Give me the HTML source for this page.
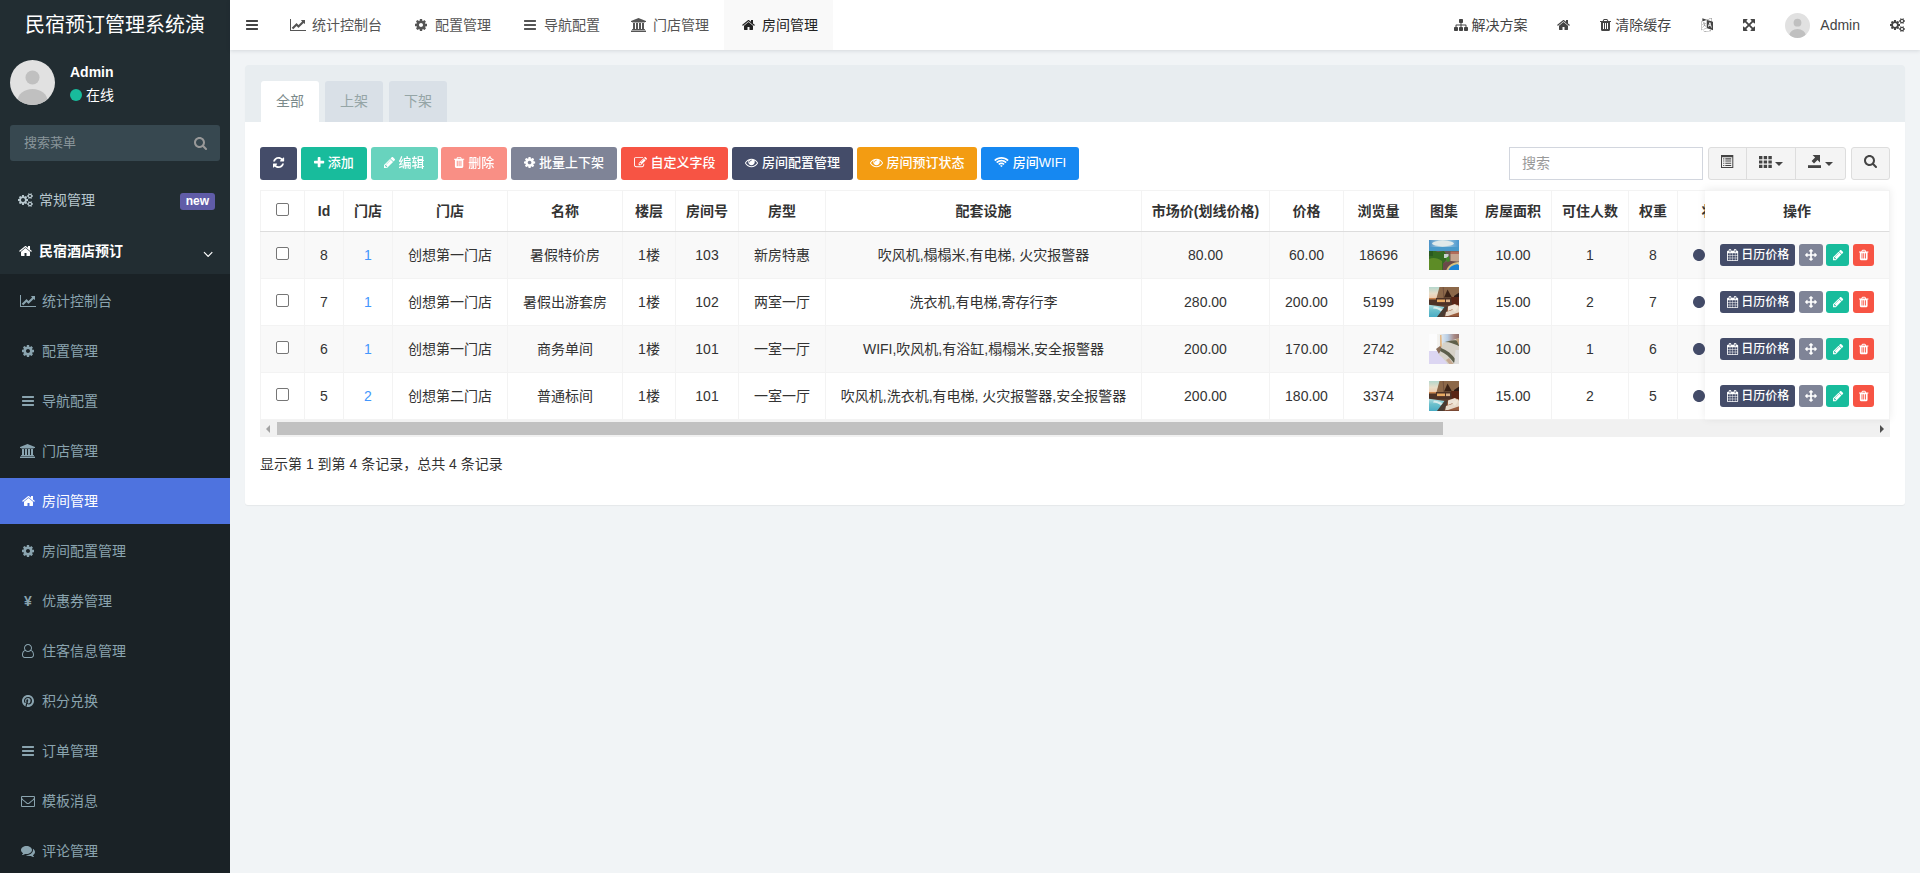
<!DOCTYPE html>
<html lang="zh-CN">
<head>
<meta charset="utf-8">
<title>民宿预订管理系统演示</title>
<style>
*{box-sizing:border-box}
html,body{margin:0;padding:0}
body{width:1920px;height:873px;overflow:hidden;background:#f1f4f6;color:#333;
 font-family:"Liberation Sans","Noto Sans CJK SC",sans-serif;font-size:14px;line-height:1.42857143}
a{text-decoration:none;color:inherit}
ul{list-style:none;margin:0;padding:0}
svg.i{display:inline-block;fill:currentColor;overflow:visible}
.fw{display:inline-block;text-align:center}

/* header */
.main-header{position:absolute;left:0;top:0;width:1920px;height:50px;z-index:10}
.logo{position:absolute;left:0;top:0;width:230px;height:50px;background:#222d32;color:#fff;font-size:20px;line-height:50px;text-align:center;white-space:nowrap;overflow:hidden;padding:0 15px}
.navbar{position:absolute;left:230px;top:0;right:0;height:50px;background:#fff;box-shadow:0 1px 4px rgba(0,21,41,.12)}
.sidebar-toggle{position:absolute;left:0;top:0;width:44px;height:50px;line-height:50px;text-align:center;color:#444}
.addtabs{position:absolute;left:44px;top:0;height:50px;display:flex}
.addtabs li{height:50px;line-height:50px;padding:0 15px;color:#555;white-space:nowrap}
.addtabs li.active{background:#f9f9f9;color:#222}
.addtabs li .fw{margin-right:5px}
.custom-menu{position:absolute;right:0;top:0;height:50px;display:flex}
.custom-menu li{height:50px;line-height:50px;padding:0 15px;color:#444;white-space:nowrap}
.custom-menu .uimg{display:inline-block;width:25px;height:25px;border-radius:50%;vertical-align:middle;margin-right:10px;margin-top:-1px;overflow:hidden}

/* sidebar */
.main-sidebar{position:absolute;left:0;top:50px;width:230px;height:823px;background:#222d32;overflow:hidden}
.user-panel{position:relative;height:65px;padding:10px}
.user-panel .avatar{position:absolute;left:10px;top:10px;width:45px;height:45px;border-radius:50%;overflow:hidden}
.user-panel .info{position:absolute;left:70px;top:0;color:#fff}
.user-panel .info p{margin:0;position:absolute;top:13px;left:0;font-weight:bold;font-size:14px;line-height:18px;white-space:nowrap}
.user-panel .info .st{position:absolute;top:36px;left:0;font-size:14px;line-height:18px;white-space:nowrap}
.user-panel .info .st i{display:inline-block;width:12px;height:12px;border-radius:50%;background:#18bc9c;margin-right:4px;vertical-align:-1px}
.sidebar-form{margin:10px;height:36px;border-radius:3px;background:#374850;position:relative;color:#8d9ea6}
.sidebar-form span{position:absolute;left:14px;top:0;line-height:36px;font-size:13px;color:#8a969b}
.sidebar-form svg{position:absolute;right:13px;top:11px}
.menu{padding-top:6px}
.menu>li>a{display:block;height:46px;line-height:46px;margin-bottom:5px;padding:0 5px 0 15px;color:#b8c7ce;position:relative;white-space:nowrap}
.menu>li>a>.fw{margin-right:4px;width:20px!important}
.menu>li.active>a{color:#fff;font-weight:bold;margin-bottom:0}
.badge-new{position:absolute;right:15px;top:16px;height:17px;line-height:17px;padding:0 6px;border-radius:3px;background:#605ca8;color:#fff;font-size:12px;font-weight:bold}
.chev{position:absolute;right:17px;top:4px}
.treeview{background:#1a2226;padding-top:4px;padding-bottom:400px}
.treeview li a{display:block;height:46px;line-height:46px;margin:0 0 4px 0;padding:0 5px 0 20px;color:#8aa4af;white-space:nowrap}
.treeview li a .fw{margin-right:6px;width:16px!important}
.treeview li.active a{background:#4e73df;color:#fff}

/* content */
.content{position:absolute;left:230px;top:50px;width:1690px;height:823px;padding:15px}
.panel{background:#fff;border-radius:3px;box-shadow:0 1px 1px rgba(0,0,0,.05);width:1660px;height:440px;position:relative}
.panel-heading{height:57px;background:#e8edf0;border-radius:3px 3px 0 0;padding:16px 0 0 16px}
.nav-tabs{display:flex}
.nav-tabs li{width:58px;height:41px;line-height:41px;text-align:center;margin-right:6px;background:#d9e0e7;color:#95a5a6;border-radius:3px 3px 0 0}
.nav-tabs li.active{background:#fff;color:#7b8a8b}

/* panel body */
.panel-body{position:relative}
.toolbar{position:absolute;left:15px;top:25px;width:1630px;height:33px}
.tb-left{position:absolute;left:0;top:0;white-space:nowrap;font-size:14px}
.btn{display:inline-block;height:33px;line-height:31px;padding:0 13px;border-radius:3px;color:#fff;font-size:13px;font-weight:500;white-space:nowrap;vertical-align:top}
.b-primary{background:#444c69}
.b-success{background:#18bc9c}
.b-danger{background:#f75444}
.b-default{background:#7f8497}
.b-warning{background:#f39c12}
.b-info{background:#1688f1}
.dis{opacity:.65}
.tb-search{position:absolute;left:1249px;top:0;width:194px;height:33px;border:1px solid #d2d6de;background:#fff;padding:0 12px;line-height:31px;color:#999}
.tb-group{position:absolute;left:1448px;top:0;width:138px;height:33px;border:1px solid #ddd;border-radius:3px;background:#f4f4f4;display:flex;color:#444}
.tb-group a{display:flex;align-items:center;justify-content:center;height:31px;border-right:1px solid #ddd}
.tb-group a svg{margin-top:-4px}
.tb-group .g1{width:38px}.tb-group .g2{width:49px}.tb-group .g3{width:49px;border-right:0}
.caret{display:inline-block;width:0;height:0;margin-left:4px;margin-top:1px;border-top:4px solid #444;border-left:4px solid transparent;border-right:4px solid transparent}
.tb-s{position:absolute;left:1591px;top:0;width:39px;height:33px;border:1px solid #ddd;border-radius:3px;background:#f4f4f4;text-align:center;line-height:31px;color:#444}
.tb-s svg{position:relative;top:-2.500px;left:-.500px}
.tablewrap{position:absolute;left:15px;top:68px;width:1630px;height:230px;overflow:hidden}
.tbl{border-collapse:collapse;table-layout:fixed;width:1677px;font-size:14px}
.tbl th,.tbl td{border:1px solid #f3f3f3;text-align:center;vertical-align:middle;padding:0;white-space:nowrap;overflow:hidden}
.tbl th{height:41px;font-weight:bold;color:#333;border-bottom:1px solid #ddd}
.tbl td{height:47px;color:#333}
.tbl tbody tr:nth-child(odd){background:#f9f9f9}
.cb{display:inline-block;width:13px;height:13px;border:1px solid #767676;border-radius:2px;background:#fff;vertical-align:middle;margin-top:-5px}
.lk{color:#4397fd}
.im{display:inline-block;width:30px;height:30px;vertical-align:middle;position:relative;left:-.500px}
.tbl td.tg{color:#444c69}
.tbl td.tg svg{position:relative;left:-1px}
.fixedcol{position:absolute;left:1460px;top:68px;width:185px;height:230px;background:#fff;box-shadow:0 -1px 8px rgba(0,0,0,.08);z-index:2}
.fh{height:42px;line-height:40px;text-align:center;font-weight:bold;border-bottom:1px solid #ddd;border-top:1px solid #f3f3f3;border-right:1px solid #f3f3f3}
.fr{height:47px;line-height:46px;text-align:center;border-bottom:1px solid #f3f3f3;border-right:1px solid #f3f3f3;font-size:12px;white-space:nowrap}
.fr.odd{background:#f9f9f9}
.xs{display:inline-block;height:22px;line-height:22px;padding:0 6px;border-radius:3px;color:#fff;font-size:12px;font-weight:500;vertical-align:middle;position:relative;top:-1px}
.xs.cal{padding-left:7px}.xs.pen{padding:0 6.600px}
.hscroll{position:absolute;left:15px;top:298px;width:1630px;height:17px;background:#f1f1f1}
.hscroll .thumb{position:absolute;left:17px;top:2px;width:1166px;height:13px;background:#c1c1c1}
.hscroll .al{position:absolute;left:6px;top:5px;border-right:4px solid #a3a3a3;border-top:4px solid transparent;border-bottom:4px solid transparent}
.hscroll .ar{position:absolute;right:6px;top:5px;border-left:4px solid #505050;border-top:4px solid transparent;border-bottom:4px solid transparent}
.pinfo{position:absolute;left:15px;top:331px;line-height:22px;color:#333;white-space:nowrap}
.yen{font-weight:bold;font-size:14px}
.sidebar-form svg{color:#999}
</style>
</head>
<body>
<header class="main-header">
  <a class="logo">民宿预订管理系统演</a>
  <nav class="navbar">
    <a class="sidebar-toggle"><svg class="i" viewBox="0 -1536 1536 1792" style="width:12.000px;height:14px;vertical-align:-2.000px;"><path transform="scale(1,-1)" d="M1536 192C1536 227 1507 256 1472 256H64C29 256 0 227 0 192V64C0 29 29 0 64 0H1472C1507 0 1536 29 1536 64ZM1536 704C1536 739 1507 768 1472 768H64C29 768 0 739 0 704V576C0 541 29 512 64 512H1472C1507 512 1536 541 1536 576ZM1536 1216C1536 1251 1507 1280 1472 1280H64C29 1280 0 1251 0 1216V1088C0 1053 29 1024 64 1024H1472C1507 1024 1536 1053 1536 1088Z"/></svg></a>
    <ul class="addtabs">
      <li><span class="fw" style="width:18.000px"><svg class="i" viewBox="0 -1536 2048 1792" style="width:16.000px;height:14px;vertical-align:-2.000px;"><path transform="scale(1,-1)" d="M2048 0H128V1408H0V-128H2048ZM1920 1248C1920 1266 1906 1280 1888 1280H1453C1425 1280 1410 1246 1431 1225L1552 1104L1088 640L855 873C842 886 822 886 809 873L224 288L416 96L832 512L1065 279C1078 266 1098 266 1111 279L1744 912L1865 791C1886 770 1920 785 1920 813Z"/></svg></span><span>统计控制台</span></li>
      <li><span class="fw" style="width:18.000px"><svg class="i" viewBox="0 -1536 1536 1792" style="width:12.000px;height:14px;vertical-align:-2.000px;"><path transform="scale(1,-1)" d="M1024 640C1024 499 909 384 768 384C627 384 512 499 512 640C512 781 627 896 768 896C909 896 1024 781 1024 640ZM1536 749C1536 766 1524 782 1507 785L1324 813C1314 846 1300 879 1283 911C1317 958 1354 1002 1388 1048C1393 1055 1396 1062 1396 1071C1396 1079 1394 1087 1389 1093C1347 1152 1277 1214 1224 1263C1217 1269 1208 1273 1199 1273C1190 1273 1181 1270 1175 1264L1033 1157C1004 1172 974 1184 943 1194L915 1378C913 1395 897 1408 879 1408H657C639 1408 625 1396 621 1380C605 1320 599 1255 592 1194C561 1184 530 1171 501 1156L363 1263C355 1269 346 1273 337 1273C303 1273 168 1127 144 1094C139 1087 135 1080 135 1071C135 1062 139 1054 145 1047C182 1002 218 957 252 909C236 879 223 849 213 817L27 789C12 786 0 768 0 753V531C0 514 12 498 29 495L212 468C222 434 236 401 253 369C219 322 182 278 148 232C143 225 140 218 140 209C140 201 142 193 147 186C189 128 259 66 312 18C319 11 328 7 337 7C346 7 355 10 362 16L503 123C532 108 562 96 593 86L621 -98C623 -115 639 -128 657 -128H879C897 -128 911 -116 915 -100C931 -40 937 25 944 86C975 96 1006 109 1035 124L1173 16C1181 11 1190 7 1199 7C1233 7 1368 154 1392 186C1398 193 1401 200 1401 209C1401 218 1397 227 1391 234C1354 279 1318 323 1284 372C1300 401 1312 431 1323 463L1508 491C1524 494 1536 512 1536 527Z"/></svg></span><span>配置管理</span></li>
      <li><span class="fw" style="width:18.000px"><svg class="i" viewBox="0 -1536 1536 1792" style="width:12.000px;height:14px;vertical-align:-2.000px;"><path transform="scale(1,-1)" d="M1536 192C1536 227 1507 256 1472 256H64C29 256 0 227 0 192V64C0 29 29 0 64 0H1472C1507 0 1536 29 1536 64ZM1536 704C1536 739 1507 768 1472 768H64C29 768 0 739 0 704V576C0 541 29 512 64 512H1472C1507 512 1536 541 1536 576ZM1536 1216C1536 1251 1507 1280 1472 1280H64C29 1280 0 1251 0 1216V1088C0 1053 29 1024 64 1024H1472C1507 1024 1536 1053 1536 1088Z"/></svg></span><span>导航配置</span></li>
      <li><span class="fw" style="width:18.000px"><svg class="i" viewBox="0 -1536 2048 1792" style="width:16.000px;height:14px;vertical-align:-2.000px;"><path transform="scale(1,-1)" d="M960 1536 0 1152V1024H128C128 989 159 960 197 960H1723C1761 960 1792 989 1792 1024H1920V1152ZM256 896V128H197C159 128 128 99 128 64V0H1792V64C1792 99 1761 128 1723 128H1664V896H1408V128H1280V896H1024V128H896V896H640V128H512V896ZM1851 -64H69C31 -64 0 -93 0 -128V-256H1920V-128C1920 -93 1889 -64 1851 -64Z"/></svg></span><span>门店管理</span></li>
      <li class="active"><span class="fw" style="width:18.000px"><svg class="i" viewBox="0 -1536 1664 1792" style="width:13.000px;height:14px;vertical-align:-2.000px;"><path transform="scale(1,-1)" d="M1408 544C1408 546 1408 548 1407 550L832 1024L257 550C257 548 256 546 256 544V64C256 29 285 0 320 0H704V384H960V0H1344C1379 0 1408 29 1408 64ZM1631 613C1642 626 1640 647 1627 658L1408 840V1248C1408 1266 1394 1280 1376 1280H1184C1166 1280 1152 1266 1152 1248V1053L908 1257C866 1292 798 1292 756 1257L37 658C24 647 22 626 33 613L95 539C100 533 108 529 116 528C125 527 133 530 140 535L832 1112L1524 535C1530 530 1537 528 1545 528C1546 528 1547 528 1548 528C1556 529 1564 533 1569 539L1631 613Z"/></svg></span><span>房间管理</span></li>
    </ul>
    <ul class="custom-menu">
      <li><svg class="i" viewBox="0 -1536 1792 1792" style="width:14.000px;height:14px;vertical-align:-2.000px;"><path transform="scale(1,-1)" d="M1792 288C1792 341 1749 384 1696 384H1600V576C1600 646 1542 704 1472 704H960V896H1056C1109 896 1152 939 1152 992V1312C1152 1365 1109 1408 1056 1408H736C683 1408 640 1365 640 1312V992C640 939 683 896 736 896H832V704H320C250 704 192 646 192 576V384H96C43 384 0 341 0 288V-32C0 -85 43 -128 96 -128H416C469 -128 512 -85 512 -32V288C512 341 469 384 416 384H320V576H832V384H736C683 384 640 341 640 288V-32C640 -85 683 -128 736 -128H1056C1109 -128 1152 -85 1152 -32V288C1152 341 1109 384 1056 384H960V576H1472V384H1376C1323 384 1280 341 1280 288V-32C1280 -85 1323 -128 1376 -128H1696C1749 -128 1792 -85 1792 -32Z"/></svg> 解决方案</li>
      <li><svg class="i" viewBox="0 -1536 1664 1792" style="width:13.000px;height:14px;vertical-align:-2.000px;"><path transform="scale(1,-1)" d="M1408 544C1408 546 1408 548 1407 550L832 1024L257 550C257 548 256 546 256 544V64C256 29 285 0 320 0H704V384H960V0H1344C1379 0 1408 29 1408 64ZM1631 613C1642 626 1640 647 1627 658L1408 840V1248C1408 1266 1394 1280 1376 1280H1184C1166 1280 1152 1266 1152 1248V1053L908 1257C866 1292 798 1292 756 1257L37 658C24 647 22 626 33 613L95 539C100 533 108 529 116 528C125 527 133 530 140 535L832 1112L1524 535C1530 530 1537 528 1545 528C1546 528 1547 528 1548 528C1556 529 1564 533 1569 539L1631 613Z"/></svg></li>
      <li><svg class="i" viewBox="0 -1536 1408 1792" style="width:11.000px;height:14px;vertical-align:-2.000px;"><path transform="scale(1,-1)" d="M512 160C512 142 498 128 480 128H416C398 128 384 142 384 160V864C384 882 398 896 416 896H480C498 896 512 882 512 864V160ZM768 160C768 142 754 128 736 128H672C654 128 640 142 640 160V864C640 882 654 896 672 896H736C754 896 768 882 768 864V160ZM1024 160C1024 142 1010 128 992 128H928C910 128 896 142 896 160V864C896 882 910 896 928 896H992C1010 896 1024 882 1024 864V160ZM480 1152 529 1269C532 1273 540 1279 546 1280H863C868 1279 877 1273 880 1269L928 1152ZM1408 1120C1408 1138 1394 1152 1376 1152H1067L997 1319C977 1368 917 1408 864 1408H544C491 1408 431 1368 411 1319L341 1152H32C14 1152 0 1138 0 1120V1056C0 1038 14 1024 32 1024H128V72C128 -38 200 -128 288 -128H1120C1208 -128 1280 -34 1280 76V1024H1376C1394 1024 1408 1038 1408 1056Z"/></svg> 清除缓存</li>
      <li><svg class="i" viewBox="0 -1536 1536 1792" style="width:12.000px;height:14px;vertical-align:-2.000px;"><path transform="scale(1,-1)" d="M654 458C656 466 645 512 639 514C633 516 514 566 497 574C483 581 449 595 433 602C478 672 506 725 510 733C517 748 565 842 566 847C567 853 568 875 567 880C566 885 549 875 525 867C501 859 456 829 438 826C421 822 365 801 336 791C307 781 253 765 231 759C209 753 189 752 177 748C178 731 182 725 182 725C185 720 197 707 210 704C224 700 247 701 257 704C268 706 286 715 288 719C290 723 287 735 291 739C295 742 350 755 370 761C391 768 470 795 480 794C477 782 414 656 393 618C373 580 254 414 229 385C209 362 163 305 147 293C151 291 180 294 185 297C218 318 272 386 290 407C342 468 388 533 424 588C431 585 488 538 503 528C518 518 577 485 590 479C603 474 652 451 654 458ZM449 944C446 957 438 961 428 961C418 960 388 952 373 947C359 943 328 934 315 931C302 928 273 932 269 936C265 940 274 905 286 892C308 870 326 867 335 866C355 866 380 872 395 878C410 884 435 897 445 916C447 920 452 927 449 944ZM1147 815 1071 630 1210 588ZM39 15V1046L733 1279V247ZM1280 332 1243 467 1032 532 987 422 885 453 1101 989 1201 958 1382 301ZM777 1294 1350 1490V1110ZM1088 -29 1131 -102C1100 -119 1071 -138 1038 -153C924 -202 839 -218 714 -218C613 -218 487 -177 397 -132C384 -126 337 -97 328 -97C318 -97 310 -105 310 -116C310 -123 312 -127 318 -132C402 -193 595 -256 701 -256H785C814 -256 847 -250 876 -244C971 -228 1071 -188 1152 -136L1192 -202L1246 -42ZM1536 1050 1389 1097V1515C1389 1528 1380 1536 1369 1536C1360 1536 738 1321 731 1319L173 1517V1133C88 1104 27 1084 24 1083C18 1081 10 1079 4 1072C2 1070 1 1065 0 1062V-16C0 -17 1 -18 1 -19C4 -27 11 -32 19 -32C29 -32 746 210 762 217C762 217 763 217 1536 -29Z"/></svg></li>
      <li><svg class="i" viewBox="0 -1536 1536 1792" style="width:12.000px;height:14px;vertical-align:-2.000px;"><path transform="scale(1,-1)" d="M1283 995 1427 851C1439 839 1455 832 1472 832C1480 832 1489 834 1497 837C1520 847 1536 870 1536 896V1344C1536 1379 1507 1408 1472 1408H1024C998 1408 975 1392 965 1368C955 1345 960 1317 979 1299L1123 1155L768 800L413 1155L557 1299C576 1317 581 1345 571 1368C561 1392 538 1408 512 1408H64C29 1408 0 1379 0 1344V896C0 870 16 847 40 837C47 834 56 832 64 832C81 832 97 839 109 851L253 995L608 640L253 285L109 429C91 448 63 453 40 443C16 433 0 410 0 384V-64C0 -99 29 -128 64 -128H512C538 -128 561 -112 571 -88C581 -65 576 -37 557 -19L413 125L768 480L1123 125L979 -19C960 -37 955 -65 965 -88C975 -112 998 -128 1024 -128H1472C1507 -128 1536 -99 1536 -64V384C1536 410 1520 433 1497 443C1473 453 1445 448 1427 429L1283 285L928 640Z"/></svg></li>
      <li><span class="uimg"><svg viewBox="0 0 45 45" width="100%" height="100%" style="display:block"><rect width="45" height="45" fill="#e1e1e1"/><circle cx="22.5" cy="17.5" r="7" fill="#c0c0c0"/><ellipse cx="22.5" cy="41" rx="15" ry="12" fill="#c0c0c0"/></svg></span><span>Admin</span></li>
      <li><svg class="i" viewBox="0 -1536 1920 1792" style="width:15.000px;height:14px;vertical-align:-2.000px;"><path transform="scale(1,-1)" d="M896 640C896 499 781 384 640 384C499 384 384 499 384 640C384 781 499 896 640 896C781 896 896 781 896 640ZM1664 128C1664 58 1607 0 1536 0C1466 0 1408 57 1408 128C1408 198 1466 256 1536 256C1606 256 1664 198 1664 128ZM1664 1152C1664 1082 1607 1024 1536 1024C1466 1024 1408 1081 1408 1152C1408 1222 1466 1280 1536 1280C1606 1280 1664 1222 1664 1152ZM1280 731C1280 745 1270 758 1256 761L1104 784C1095 812 1083 839 1070 866C1098 905 1128 941 1157 980C1161 986 1164 992 1164 999C1164 1027 1046 1135 1020 1159C1014 1164 1007 1167 999 1167C992 1167 985 1165 979 1160L861 1071C837 1083 812 1094 786 1102L763 1255C761 1269 747 1280 733 1280H547C533 1280 521 1270 517 1256C504 1207 499 1152 494 1102C467 1093 442 1083 417 1070L302 1160C296 1164 289 1167 281 1167C252 1167 140 1046 120 1019C115 1013 113 1006 113 999C113 992 116 985 120 979C152 941 182 904 210 864C197 839 186 814 178 788L23 764C10 762 0 747 0 734V549C0 535 10 522 24 520L176 496C185 468 197 441 211 414C182 375 152 338 123 300C119 294 116 288 116 281C116 252 234 145 260 121C266 116 273 113 281 113C288 113 296 115 301 120L419 209C443 197 468 186 494 178L517 25C519 11 533 0 547 0H733C747 0 759 10 763 24C776 73 781 128 786 179C813 187 838 197 863 210L978 120C984 116 991 113 999 113C1028 113 1140 235 1160 262C1165 267 1167 274 1167 281C1167 289 1164 295 1160 301C1128 339 1098 376 1070 416C1083 441 1094 466 1102 492L1257 516C1270 518 1280 533 1280 546ZM1920 198C1920 213 1791 227 1771 229C1763 247 1753 265 1741 281C1750 301 1792 401 1792 419C1792 421 1791 424 1788 426C1776 433 1669 496 1664 496L1658 494C1624 460 1594 421 1566 382C1556 383 1546 384 1536 384C1526 384 1516 383 1506 382C1496 397 1421 496 1408 496C1403 496 1296 432 1284 426C1281 424 1280 421 1280 419C1280 402 1322 301 1331 281C1319 265 1309 247 1301 229C1281 227 1152 213 1152 198V58C1152 43 1281 29 1301 27C1309 8 1319 -9 1331 -25C1322 -45 1280 -146 1280 -163C1280 -165 1281 -168 1284 -170C1296 -177 1403 -241 1408 -241C1421 -241 1496 -141 1506 -126C1516 -127 1526 -128 1536 -128C1546 -128 1556 -127 1566 -126C1576 -141 1651 -241 1664 -241C1669 -241 1776 -177 1788 -170C1791 -168 1792 -166 1792 -163C1792 -145 1750 -45 1741 -25C1753 -9 1763 8 1771 27C1791 29 1920 43 1920 58ZM1920 1222C1920 1237 1791 1251 1771 1253C1763 1271 1753 1289 1741 1305C1750 1325 1792 1425 1792 1443C1792 1445 1791 1448 1788 1450C1776 1457 1669 1520 1664 1520L1658 1518C1624 1484 1594 1445 1566 1406C1556 1407 1546 1408 1536 1408C1526 1408 1516 1407 1506 1406C1496 1421 1421 1520 1408 1520C1403 1520 1296 1456 1284 1450C1281 1448 1280 1445 1280 1443C1280 1426 1322 1325 1331 1305C1319 1289 1309 1271 1301 1253C1281 1251 1152 1237 1152 1222V1082C1152 1067 1281 1053 1301 1051C1309 1032 1319 1015 1331 999C1322 979 1280 878 1280 861C1280 859 1281 856 1284 854C1296 847 1403 783 1408 783C1421 783 1496 883 1506 898C1516 897 1526 896 1536 896C1546 896 1556 897 1566 898C1576 883 1651 783 1664 783C1669 783 1776 847 1788 854C1791 856 1792 858 1792 861C1792 879 1750 979 1741 999C1753 1015 1763 1032 1771 1051C1791 1053 1920 1067 1920 1082Z"/></svg></li>
    </ul>
  </nav>
</header>

<aside class="main-sidebar">
  <div class="user-panel">
    <div class="avatar"><svg viewBox="0 0 45 45" width="100%" height="100%" style="display:block"><rect width="45" height="45" fill="#e1e1e1"/><circle cx="22.5" cy="17.5" r="7" fill="#c0c0c0"/><ellipse cx="22.5" cy="41" rx="15" ry="12" fill="#c0c0c0"/></svg></div>
    <div class="info"><p>Admin</p><span class="st"><i></i>在线</span></div>
  </div>
  <div class="sidebar-form"><span>搜索菜单</span><svg class="i" viewBox="0 -1536 1664 1792" style="width:13.000px;height:14px;vertical-align:-2.000px;"><path transform="scale(1,-1)" d="M1152 704C1152 457 951 256 704 256C457 256 256 457 256 704C256 951 457 1152 704 1152C951 1152 1152 951 1152 704ZM1664 -128C1664 -94 1650 -61 1627 -38L1284 305C1365 422 1408 562 1408 704C1408 1093 1093 1408 704 1408C315 1408 0 1093 0 704C0 315 315 0 704 0C846 0 986 43 1103 124L1446 -218C1469 -242 1502 -256 1536 -256C1606 -256 1664 -198 1664 -128Z"/></svg></div>
  <ul class="menu">
    <li><a><span class="fw" style="width:18.000px"><svg class="i" viewBox="0 -1536 1920 1792" style="width:15.000px;height:14px;vertical-align:-2.000px;"><path transform="scale(1,-1)" d="M896 640C896 499 781 384 640 384C499 384 384 499 384 640C384 781 499 896 640 896C781 896 896 781 896 640ZM1664 128C1664 58 1607 0 1536 0C1466 0 1408 57 1408 128C1408 198 1466 256 1536 256C1606 256 1664 198 1664 128ZM1664 1152C1664 1082 1607 1024 1536 1024C1466 1024 1408 1081 1408 1152C1408 1222 1466 1280 1536 1280C1606 1280 1664 1222 1664 1152ZM1280 731C1280 745 1270 758 1256 761L1104 784C1095 812 1083 839 1070 866C1098 905 1128 941 1157 980C1161 986 1164 992 1164 999C1164 1027 1046 1135 1020 1159C1014 1164 1007 1167 999 1167C992 1167 985 1165 979 1160L861 1071C837 1083 812 1094 786 1102L763 1255C761 1269 747 1280 733 1280H547C533 1280 521 1270 517 1256C504 1207 499 1152 494 1102C467 1093 442 1083 417 1070L302 1160C296 1164 289 1167 281 1167C252 1167 140 1046 120 1019C115 1013 113 1006 113 999C113 992 116 985 120 979C152 941 182 904 210 864C197 839 186 814 178 788L23 764C10 762 0 747 0 734V549C0 535 10 522 24 520L176 496C185 468 197 441 211 414C182 375 152 338 123 300C119 294 116 288 116 281C116 252 234 145 260 121C266 116 273 113 281 113C288 113 296 115 301 120L419 209C443 197 468 186 494 178L517 25C519 11 533 0 547 0H733C747 0 759 10 763 24C776 73 781 128 786 179C813 187 838 197 863 210L978 120C984 116 991 113 999 113C1028 113 1140 235 1160 262C1165 267 1167 274 1167 281C1167 289 1164 295 1160 301C1128 339 1098 376 1070 416C1083 441 1094 466 1102 492L1257 516C1270 518 1280 533 1280 546ZM1920 198C1920 213 1791 227 1771 229C1763 247 1753 265 1741 281C1750 301 1792 401 1792 419C1792 421 1791 424 1788 426C1776 433 1669 496 1664 496L1658 494C1624 460 1594 421 1566 382C1556 383 1546 384 1536 384C1526 384 1516 383 1506 382C1496 397 1421 496 1408 496C1403 496 1296 432 1284 426C1281 424 1280 421 1280 419C1280 402 1322 301 1331 281C1319 265 1309 247 1301 229C1281 227 1152 213 1152 198V58C1152 43 1281 29 1301 27C1309 8 1319 -9 1331 -25C1322 -45 1280 -146 1280 -163C1280 -165 1281 -168 1284 -170C1296 -177 1403 -241 1408 -241C1421 -241 1496 -141 1506 -126C1516 -127 1526 -128 1536 -128C1546 -128 1556 -127 1566 -126C1576 -141 1651 -241 1664 -241C1669 -241 1776 -177 1788 -170C1791 -168 1792 -166 1792 -163C1792 -145 1750 -45 1741 -25C1753 -9 1763 8 1771 27C1791 29 1920 43 1920 58ZM1920 1222C1920 1237 1791 1251 1771 1253C1763 1271 1753 1289 1741 1305C1750 1325 1792 1425 1792 1443C1792 1445 1791 1448 1788 1450C1776 1457 1669 1520 1664 1520L1658 1518C1624 1484 1594 1445 1566 1406C1556 1407 1546 1408 1536 1408C1526 1408 1516 1407 1506 1406C1496 1421 1421 1520 1408 1520C1403 1520 1296 1456 1284 1450C1281 1448 1280 1445 1280 1443C1280 1426 1322 1325 1331 1305C1319 1289 1309 1271 1301 1253C1281 1251 1152 1237 1152 1222V1082C1152 1067 1281 1053 1301 1051C1309 1032 1319 1015 1331 999C1322 979 1280 878 1280 861C1280 859 1281 856 1284 854C1296 847 1403 783 1408 783C1421 783 1496 883 1506 898C1516 897 1526 896 1536 896C1546 896 1556 897 1566 898C1576 883 1651 783 1664 783C1669 783 1776 847 1788 854C1791 856 1792 858 1792 861C1792 879 1750 979 1741 999C1753 1015 1763 1032 1771 1051C1791 1053 1920 1067 1920 1082Z"/></svg></span><span>常规管理</span><small class="badge-new">new</small></a></li>
    <li class="active"><a><span class="fw" style="width:18.000px"><svg class="i" viewBox="0 -1536 1664 1792" style="width:13.000px;height:14px;vertical-align:-2.000px;"><path transform="scale(1,-1)" d="M1408 544C1408 546 1408 548 1407 550L832 1024L257 550C257 548 256 546 256 544V64C256 29 285 0 320 0H704V384H960V0H1344C1379 0 1408 29 1408 64ZM1631 613C1642 626 1640 647 1627 658L1408 840V1248C1408 1266 1394 1280 1376 1280H1184C1166 1280 1152 1266 1152 1248V1053L908 1257C866 1292 798 1292 756 1257L37 658C24 647 22 626 33 613L95 539C100 533 108 529 116 528C125 527 133 530 140 535L832 1112L1524 535C1530 530 1537 528 1545 528C1546 528 1547 528 1548 528C1556 529 1564 533 1569 539L1631 613Z"/></svg></span><span>民宿酒店预订</span><span class="chev"><svg class="i" viewBox="0 -1536 1152 1792" style="width:10.286px;height:16px;vertical-align:-2.286px;"><path transform="scale(1,-1)" d="M1075 800C1075 808 1071 817 1065 823L1015 873C1009 879 1000 883 992 883C984 883 975 879 969 873L576 480L183 873C177 879 168 883 160 883C151 883 143 879 137 873L87 823C81 817 77 808 77 800C77 792 81 783 87 777L553 311C559 305 568 301 576 301C584 301 593 305 599 311L1065 777C1071 783 1075 792 1075 800Z"/></svg></span></a>
      <ul class="treeview">
        <li><a><span class="fw" style="width:18.000px"><svg class="i" viewBox="0 -1536 2048 1792" style="width:16.000px;height:14px;vertical-align:-2.000px;"><path transform="scale(1,-1)" d="M2048 0H128V1408H0V-128H2048ZM1920 1248C1920 1266 1906 1280 1888 1280H1453C1425 1280 1410 1246 1431 1225L1552 1104L1088 640L855 873C842 886 822 886 809 873L224 288L416 96L832 512L1065 279C1078 266 1098 266 1111 279L1744 912L1865 791C1886 770 1920 785 1920 813Z"/></svg></span><span>统计控制台</span></a></li>
        <li><a><span class="fw" style="width:18.000px"><svg class="i" viewBox="0 -1536 1536 1792" style="width:12.000px;height:14px;vertical-align:-2.000px;"><path transform="scale(1,-1)" d="M1024 640C1024 499 909 384 768 384C627 384 512 499 512 640C512 781 627 896 768 896C909 896 1024 781 1024 640ZM1536 749C1536 766 1524 782 1507 785L1324 813C1314 846 1300 879 1283 911C1317 958 1354 1002 1388 1048C1393 1055 1396 1062 1396 1071C1396 1079 1394 1087 1389 1093C1347 1152 1277 1214 1224 1263C1217 1269 1208 1273 1199 1273C1190 1273 1181 1270 1175 1264L1033 1157C1004 1172 974 1184 943 1194L915 1378C913 1395 897 1408 879 1408H657C639 1408 625 1396 621 1380C605 1320 599 1255 592 1194C561 1184 530 1171 501 1156L363 1263C355 1269 346 1273 337 1273C303 1273 168 1127 144 1094C139 1087 135 1080 135 1071C135 1062 139 1054 145 1047C182 1002 218 957 252 909C236 879 223 849 213 817L27 789C12 786 0 768 0 753V531C0 514 12 498 29 495L212 468C222 434 236 401 253 369C219 322 182 278 148 232C143 225 140 218 140 209C140 201 142 193 147 186C189 128 259 66 312 18C319 11 328 7 337 7C346 7 355 10 362 16L503 123C532 108 562 96 593 86L621 -98C623 -115 639 -128 657 -128H879C897 -128 911 -116 915 -100C931 -40 937 25 944 86C975 96 1006 109 1035 124L1173 16C1181 11 1190 7 1199 7C1233 7 1368 154 1392 186C1398 193 1401 200 1401 209C1401 218 1397 227 1391 234C1354 279 1318 323 1284 372C1300 401 1312 431 1323 463L1508 491C1524 494 1536 512 1536 527Z"/></svg></span><span>配置管理</span></a></li>
        <li><a><span class="fw" style="width:18.000px"><svg class="i" viewBox="0 -1536 1536 1792" style="width:12.000px;height:14px;vertical-align:-2.000px;"><path transform="scale(1,-1)" d="M1536 192C1536 227 1507 256 1472 256H64C29 256 0 227 0 192V64C0 29 29 0 64 0H1472C1507 0 1536 29 1536 64ZM1536 704C1536 739 1507 768 1472 768H64C29 768 0 739 0 704V576C0 541 29 512 64 512H1472C1507 512 1536 541 1536 576ZM1536 1216C1536 1251 1507 1280 1472 1280H64C29 1280 0 1251 0 1216V1088C0 1053 29 1024 64 1024H1472C1507 1024 1536 1053 1536 1088Z"/></svg></span><span>导航配置</span></a></li>
        <li><a><span class="fw" style="width:18.000px"><svg class="i" viewBox="0 -1536 2048 1792" style="width:16.000px;height:14px;vertical-align:-2.000px;"><path transform="scale(1,-1)" d="M960 1536 0 1152V1024H128C128 989 159 960 197 960H1723C1761 960 1792 989 1792 1024H1920V1152ZM256 896V128H197C159 128 128 99 128 64V0H1792V64C1792 99 1761 128 1723 128H1664V896H1408V128H1280V896H1024V128H896V896H640V128H512V896ZM1851 -64H69C31 -64 0 -93 0 -128V-256H1920V-128C1920 -93 1889 -64 1851 -64Z"/></svg></span><span>门店管理</span></a></li>
        <li class="active"><a><span class="fw" style="width:18.000px"><svg class="i" viewBox="0 -1536 1664 1792" style="width:13.000px;height:14px;vertical-align:-2.000px;"><path transform="scale(1,-1)" d="M1408 544C1408 546 1408 548 1407 550L832 1024L257 550C257 548 256 546 256 544V64C256 29 285 0 320 0H704V384H960V0H1344C1379 0 1408 29 1408 64ZM1631 613C1642 626 1640 647 1627 658L1408 840V1248C1408 1266 1394 1280 1376 1280H1184C1166 1280 1152 1266 1152 1248V1053L908 1257C866 1292 798 1292 756 1257L37 658C24 647 22 626 33 613L95 539C100 533 108 529 116 528C125 527 133 530 140 535L832 1112L1524 535C1530 530 1537 528 1545 528C1546 528 1547 528 1548 528C1556 529 1564 533 1569 539L1631 613Z"/></svg></span><span>房间管理</span></a></li>
        <li><a><span class="fw" style="width:18.000px"><svg class="i" viewBox="0 -1536 1536 1792" style="width:12.000px;height:14px;vertical-align:-2.000px;"><path transform="scale(1,-1)" d="M1024 640C1024 499 909 384 768 384C627 384 512 499 512 640C512 781 627 896 768 896C909 896 1024 781 1024 640ZM1536 749C1536 766 1524 782 1507 785L1324 813C1314 846 1300 879 1283 911C1317 958 1354 1002 1388 1048C1393 1055 1396 1062 1396 1071C1396 1079 1394 1087 1389 1093C1347 1152 1277 1214 1224 1263C1217 1269 1208 1273 1199 1273C1190 1273 1181 1270 1175 1264L1033 1157C1004 1172 974 1184 943 1194L915 1378C913 1395 897 1408 879 1408H657C639 1408 625 1396 621 1380C605 1320 599 1255 592 1194C561 1184 530 1171 501 1156L363 1263C355 1269 346 1273 337 1273C303 1273 168 1127 144 1094C139 1087 135 1080 135 1071C135 1062 139 1054 145 1047C182 1002 218 957 252 909C236 879 223 849 213 817L27 789C12 786 0 768 0 753V531C0 514 12 498 29 495L212 468C222 434 236 401 253 369C219 322 182 278 148 232C143 225 140 218 140 209C140 201 142 193 147 186C189 128 259 66 312 18C319 11 328 7 337 7C346 7 355 10 362 16L503 123C532 108 562 96 593 86L621 -98C623 -115 639 -128 657 -128H879C897 -128 911 -116 915 -100C931 -40 937 25 944 86C975 96 1006 109 1035 124L1173 16C1181 11 1190 7 1199 7C1233 7 1368 154 1392 186C1398 193 1401 200 1401 209C1401 218 1397 227 1391 234C1354 279 1318 323 1284 372C1300 401 1312 431 1323 463L1508 491C1524 494 1536 512 1536 527Z"/></svg></span><span>房间配置管理</span></a></li>
        <li><a><span class="fw yen">¥</span><span>优惠券管理</span></a></li>
        <li><a><span class="fw" style="width:18.000px"><svg class="i" viewBox="0 -1536 1536 1792" style="width:12.000px;height:14px;vertical-align:-2.000px;"><path transform="scale(1,-1)" d="M1201 752C1251 831 1280 924 1280 1024C1280 1306 1050 1536 768 1536C486 1536 256 1306 256 1024C256 924 285 831 335 752C194 711 0 572 0 117C0 -89 153 -256 341 -256H1195C1383 -256 1536 -89 1536 117C1536 572 1342 711 1201 752ZM768 1408C980 1408 1152 1236 1152 1024C1152 812 980 640 768 640C556 640 384 812 384 1024C384 1236 556 1408 768 1408ZM1195 -128H341C224 -128 128 -19 128 117C128 432 234 629 432 639C522 560 639 512 768 512C897 512 1014 560 1104 639C1302 629 1408 432 1408 117C1408 -19 1312 -128 1195 -128Z"/></svg></span><span>住客信息管理</span></a></li>
        <li><a><span class="fw" style="width:18.000px"><svg class="i" viewBox="0 -1536 1536 1792" style="width:12.000px;height:14px;vertical-align:-2.000px;"><path transform="scale(1,-1)" d="M1536 640C1536 1064 1192 1408 768 1408C344 1408 0 1064 0 640C0 325 189 55 460 -64C458 -10 459 55 473 113C473 113 488 175 572 531C547 580 547 653 547 653C547 767 613 852 695 852C765 852 799 799 799 736C799 666 754 561 731 464C712 382 772 316 852 316C998 316 1096 503 1096 724C1096 893 982 1019 776 1019C543 1019 398 845 398 651C398 584 418 537 449 500C463 483 465 477 460 457C456 443 448 409 444 396C439 376 423 369 406 376C299 420 249 538 249 670C249 888 433 1150 797 1150C1091 1150 1284 937 1284 710C1284 408 1116 183 869 183C786 183 708 228 682 279C637 102 628 68 628 68C612 9 579 -50 550 -96C620 -117 692 -128 768 -128C1192 -128 1536 216 1536 640Z"/></svg></span><span>积分兑换</span></a></li>
        <li><a><span class="fw" style="width:18.000px"><svg class="i" viewBox="0 -1536 1536 1792" style="width:12.000px;height:14px;vertical-align:-2.000px;"><path transform="scale(1,-1)" d="M1536 192C1536 227 1507 256 1472 256H64C29 256 0 227 0 192V64C0 29 29 0 64 0H1472C1507 0 1536 29 1536 64ZM1536 704C1536 739 1507 768 1472 768H64C29 768 0 739 0 704V576C0 541 29 512 64 512H1472C1507 512 1536 541 1536 576ZM1536 1216C1536 1251 1507 1280 1472 1280H64C29 1280 0 1251 0 1216V1088C0 1053 29 1024 64 1024H1472C1507 1024 1536 1053 1536 1088Z"/></svg></span><span>订单管理</span></a></li>
        <li><a><span class="fw" style="width:18.000px"><svg class="i" viewBox="0 -1536 1792 1792" style="width:14.000px;height:14px;vertical-align:-2.000px;"><path transform="scale(1,-1)" d="M1664 32C1664 15 1649 0 1632 0H160C143 0 128 15 128 32V800C149 776 172 754 197 734C340 624 484 512 623 396C698 333 791 256 895 256H896H897C1001 256 1094 333 1169 396C1308 512 1452 624 1595 734C1620 754 1643 776 1664 800V32ZM1664 1083C1664 998 1582 887 1517 836C1383 731 1249 625 1116 519C1063 476 967 384 897 384H896H895C825 384 729 476 676 519C543 625 409 731 275 836C185 907 128 1006 128 1120C128 1137 143 1152 160 1152H1632C1670 1152 1664 1108 1664 1083ZM1792 1120C1792 1208 1720 1280 1632 1280H160C72 1280 0 1208 0 1120V32C0 -56 72 -128 160 -128H1632C1720 -128 1792 -56 1792 32Z"/></svg></span><span>模板消息</span></a></li>
        <li><a><span class="fw" style="width:18.000px"><svg class="i" viewBox="0 -1536 1792 1792" style="width:14.000px;height:14px;vertical-align:-2.000px;"><path transform="scale(1,-1)" d="M1408 768C1408 1051 1093 1280 704 1280C315 1280 0 1051 0 768C0 606 104 461 266 367C232 284 188 245 149 201C138 188 125 176 129 157C129 157 129 157 129 157C132 140 146 128 161 128C162 128 163 128 164 128C194 132 223 137 250 144C351 170 445 213 528 272C584 262 643 256 704 256C1093 256 1408 485 1408 768ZM1792 512C1792 679 1682 827 1513 920C1528 871 1536 820 1536 768C1536 589 1444 424 1277 302C1122 190 919 128 704 128C675 128 645 130 616 132C741 50 907 0 1088 0C1149 0 1208 6 1264 16C1347 -43 1441 -86 1542 -112C1569 -119 1598 -124 1628 -128C1644 -130 1659 -117 1663 -99C1663 -99 1663 -99 1663 -99C1667 -80 1654 -68 1643 -55C1604 -11 1560 28 1526 111C1688 205 1792 349 1792 512Z"/></svg></span><span>评论管理</span></a></li>
      </ul>
    </li>
  </ul>
</aside>

<div class="content">
  <div class="panel">
    <div class="panel-heading">
      <ul class="nav-tabs"><li class="active">全部</li><li>上架</li><li>下架</li></ul>
    </div>
    <div class="panel-body">
<div class="toolbar">
  <div class="tb-left"><a class="btn b-primary"><svg class="i" viewBox="0 -1536 1536 1792" style="width:11.143px;height:13px;vertical-align:-1.857px;"><path transform="scale(1,-1)" d="M1511 480C1511 497 1497 512 1479 512H1287C1272 512 1262 503 1257 489C1240 449 1228 411 1204 372C1111 220 946 128 768 128C639 128 514 178 420 266L557 403C569 415 576 431 576 448C576 483 547 512 512 512H64C29 512 0 483 0 448V0C0 -35 29 -64 64 -64C81 -64 97 -57 109 -45L238 84C380 -51 569 -128 764 -128C1133 -128 1425 119 1510 473C1511 475 1511 478 1511 480ZM1536 1280C1536 1315 1507 1344 1472 1344C1455 1344 1439 1337 1427 1325L1297 1196C1155 1330 964 1408 768 1408C399 1408 104 1162 18 807C18 805 18 802 18 800C18 783 32 768 50 768H249C264 768 274 777 279 791C296 831 308 869 332 908C425 1060 590 1152 768 1152C897 1152 1022 1103 1117 1015L979 877C967 865 960 849 960 832C960 797 989 768 1024 768H1472C1507 768 1536 797 1536 832Z"/></svg></a> <a class="btn b-success"><svg class="i" viewBox="0 -1536 1408 1792" style="width:10.214px;height:13px;vertical-align:-1.857px;"><path transform="scale(1,-1)" d="M1408 800C1408 853 1365 896 1312 896H896V1312C896 1365 853 1408 800 1408H608C555 1408 512 1365 512 1312V896H96C43 896 0 853 0 800V608C0 555 43 512 96 512H512V96C512 43 555 0 608 0H800C853 0 896 43 896 96V512H1312C1365 512 1408 555 1408 608Z"/></svg> 添加</a> <a class="btn b-success dis"><svg class="i" viewBox="0 -1536 1536 1792" style="width:11.143px;height:13px;vertical-align:-1.857px;"><path transform="scale(1,-1)" d="M363 0H256V128H128V235L219 326L454 91ZM886 928C886 922 884 916 879 911L337 369C332 364 326 362 320 362C307 362 298 371 298 384C298 390 300 396 305 401L847 943C852 948 858 950 864 950C877 950 886 941 886 928ZM832 1120 0 288V-128H416L1248 704ZM1515 1024C1515 1058 1501 1091 1478 1115L1243 1349C1219 1373 1186 1387 1152 1387C1118 1387 1085 1373 1062 1349L896 1184L1312 768L1478 934C1501 957 1515 990 1515 1024Z"/></svg> 编辑</a> <a class="btn b-danger dis"><svg class="i" viewBox="0 -1536 1408 1792" style="width:10.214px;height:13px;vertical-align:-1.857px;"><path transform="scale(1,-1)" d="M512 160C512 142 498 128 480 128H416C398 128 384 142 384 160V864C384 882 398 896 416 896H480C498 896 512 882 512 864V160ZM768 160C768 142 754 128 736 128H672C654 128 640 142 640 160V864C640 882 654 896 672 896H736C754 896 768 882 768 864V160ZM1024 160C1024 142 1010 128 992 128H928C910 128 896 142 896 160V864C896 882 910 896 928 896H992C1010 896 1024 882 1024 864V160ZM480 1152 529 1269C532 1273 540 1279 546 1280H863C868 1279 877 1273 880 1269L928 1152ZM1408 1120C1408 1138 1394 1152 1376 1152H1067L997 1319C977 1368 917 1408 864 1408H544C491 1408 431 1368 411 1319L341 1152H32C14 1152 0 1138 0 1120V1056C0 1038 14 1024 32 1024H128V72C128 -38 200 -128 288 -128H1120C1208 -128 1280 -34 1280 76V1024H1376C1394 1024 1408 1038 1408 1056Z"/></svg> 删除</a> <a class="btn b-default"><svg class="i" viewBox="0 -1536 1536 1792" style="width:11.143px;height:13px;vertical-align:-1.857px;"><path transform="scale(1,-1)" d="M1024 640C1024 499 909 384 768 384C627 384 512 499 512 640C512 781 627 896 768 896C909 896 1024 781 1024 640ZM1536 749C1536 766 1524 782 1507 785L1324 813C1314 846 1300 879 1283 911C1317 958 1354 1002 1388 1048C1393 1055 1396 1062 1396 1071C1396 1079 1394 1087 1389 1093C1347 1152 1277 1214 1224 1263C1217 1269 1208 1273 1199 1273C1190 1273 1181 1270 1175 1264L1033 1157C1004 1172 974 1184 943 1194L915 1378C913 1395 897 1408 879 1408H657C639 1408 625 1396 621 1380C605 1320 599 1255 592 1194C561 1184 530 1171 501 1156L363 1263C355 1269 346 1273 337 1273C303 1273 168 1127 144 1094C139 1087 135 1080 135 1071C135 1062 139 1054 145 1047C182 1002 218 957 252 909C236 879 223 849 213 817L27 789C12 786 0 768 0 753V531C0 514 12 498 29 495L212 468C222 434 236 401 253 369C219 322 182 278 148 232C143 225 140 218 140 209C140 201 142 193 147 186C189 128 259 66 312 18C319 11 328 7 337 7C346 7 355 10 362 16L503 123C532 108 562 96 593 86L621 -98C623 -115 639 -128 657 -128H879C897 -128 911 -116 915 -100C931 -40 937 25 944 86C975 96 1006 109 1035 124L1173 16C1181 11 1190 7 1199 7C1233 7 1368 154 1392 186C1398 193 1401 200 1401 209C1401 218 1397 227 1391 234C1354 279 1318 323 1284 372C1300 401 1312 431 1323 463L1508 491C1524 494 1536 512 1536 527Z"/></svg> 批量上下架</a> <a class="btn b-danger"><svg class="i" viewBox="0 -1536 1792 1792" style="width:13.000px;height:13px;vertical-align:-1.857px;"><path transform="scale(1,-1)" d="M888 352H832V448H736V504L852 620L1004 468ZM1328 1072C1337 1063 1336 1048 1327 1039L977 689C968 680 953 679 944 688C935 697 936 712 945 721L1295 1071C1304 1080 1319 1081 1328 1072ZM1408 478C1408 491 1400 502 1388 507C1376 512 1363 510 1353 500L1289 436C1283 430 1280 422 1280 414V288C1280 200 1208 128 1120 128H288C200 128 128 200 128 288V1120C128 1208 200 1280 288 1280H1120C1135 1280 1150 1278 1165 1274C1176 1270 1188 1273 1197 1282L1246 1331C1254 1339 1257 1349 1255 1360C1253 1370 1246 1379 1237 1383C1200 1400 1160 1408 1120 1408H288C129 1408 0 1279 0 1120V288C0 129 129 0 288 0H1120C1279 0 1408 129 1408 288ZM1312 1216 640 544V256H928L1600 928ZM1756 1084C1793 1121 1793 1183 1756 1220L1604 1372C1567 1409 1505 1409 1468 1372L1376 1280L1664 992L1756 1084Z"/></svg> 自定义字段</a> <a class="btn b-primary"><svg class="i" viewBox="0 -1536 1792 1792" style="width:13.000px;height:13px;vertical-align:-1.857px;"><path transform="scale(1,-1)" d="M1664 576C1493 312 1217 128 896 128C575 128 299 312 128 576C223 723 353 849 509 929C469 861 448 783 448 704C448 457 649 256 896 256C1143 256 1344 457 1344 704C1344 783 1323 861 1283 929C1439 849 1569 723 1664 576ZM944 960C944 934 922 912 896 912C782 912 688 818 688 704C688 678 666 656 640 656C614 656 592 678 592 704C592 871 729 1008 896 1008C922 1008 944 986 944 960ZM1792 576C1792 601 1784 624 1772 645C1588 947 1251 1152 896 1152C541 1152 204 947 20 645C8 624 0 601 0 576C0 551 8 528 20 507C204 205 541 0 896 0C1251 0 1588 204 1772 507C1784 528 1792 551 1792 576Z"/></svg> 房间配置管理</a> <a class="btn b-warning"><svg class="i" viewBox="0 -1536 1792 1792" style="width:13.000px;height:13px;vertical-align:-1.857px;"><path transform="scale(1,-1)" d="M1664 576C1493 312 1217 128 896 128C575 128 299 312 128 576C223 723 353 849 509 929C469 861 448 783 448 704C448 457 649 256 896 256C1143 256 1344 457 1344 704C1344 783 1323 861 1283 929C1439 849 1569 723 1664 576ZM944 960C944 934 922 912 896 912C782 912 688 818 688 704C688 678 666 656 640 656C614 656 592 678 592 704C592 871 729 1008 896 1008C922 1008 944 986 944 960ZM1792 576C1792 601 1784 624 1772 645C1588 947 1251 1152 896 1152C541 1152 204 947 20 645C8 624 0 601 0 576C0 551 8 528 20 507C204 205 541 0 896 0C1251 0 1588 204 1772 507C1784 528 1792 551 1792 576Z"/></svg> 房间预订状态</a> <a class="btn b-info"><svg class="i" viewBox="0 -1536 2048 1792" style="width:14.857px;height:13px;vertical-align:-1.857px;"><path transform="scale(1,-1)" d="M1024 13C1050 13 1190 153 1190 180C1190 229 1062 256 1024 256C986 256 858 229 858 180C858 153 998 13 1024 13ZM1294 284C1318 284 1463 428 1463 452C1463 461 1459 469 1453 475C1346 581 1172 640 1024 640C876 640 702 581 595 475C589 469 585 461 585 452C585 428 730 284 754 284C769 284 876 384 1024 384C1171 384 1280 284 1294 284ZM1567 556C1590 556 1734 700 1734 724C1734 732 1730 740 1724 746C1545 925 1275 1024 1024 1024C773 1024 503 925 324 746C318 740 314 732 314 724C314 700 458 556 481 556C492 556 722 768 1024 768C1240 768 1379 692 1544 564C1550 560 1559 556 1567 556ZM1838 827C1861 827 2006 971 2006 995C2006 1004 2002 1012 1996 1018C1743 1269 1378 1408 1024 1408C670 1408 305 1269 52 1018C46 1012 42 1004 42 995C42 971 187 827 210 827C218 827 226 831 232 836C463 1039 712 1152 1024 1152C1336 1152 1585 1039 1816 836C1822 831 1830 827 1838 827Z"/></svg> 房间WIFI</a></div>
  <div class="tb-search"><span>搜索</span></div>
  <div class="tb-group"><a class="g1"><svg class="i" viewBox="0 0 12.3 13" style="width:12.300px;height:13px"><path fill-rule="evenodd" d="M0 0h12.300v13h-12.300zM1 2.200v9.800h10.300v-9.800z"/><path d="M2.200 3.300h1.100v1.100h-1.100zM4.300 3.300h5.900v1.100h-5.900zM2.200 5.500h1.100v1.100h-1.100zM4.300 5.500h5.900v1.100h-5.900zM2.200 7.700h1.100v1.100h-1.100zM4.300 7.700h5.900v1.100h-5.900zM2.200 9.900h1.100v1.100h-1.100zM4.300 9.900h5.900v1.100h-5.900z"/></svg></a><a class="g2"><svg class="i" viewBox="0 0 12.8 12" style="width:12.800px;height:12px"><path d="M0 0h3.400v3.200h-3.400zM4.700 0h3.400v3.200h-3.400zM9.400 0h3.400v3.200h-3.400zM0 4.400h3.400v3.200h-3.400zM4.700 4.400h3.400v3.200h-3.400zM9.400 4.400h3.400v3.200h-3.400zM0 8.800h3.400v3.200h-3.400zM4.700 8.800h3.400v3.200h-3.400zM9.400 8.800h3.400v3.200h-3.400z"/></svg><b class="caret"></b></a><a class="g3"><svg class="i" viewBox="0 0 13 13" style="width:13px;height:13px"><rect x="0" y="10.200" width="13" height="2.800"/><path d="M4.600 0h7.400v7.400l-2.500-2.500-3.500 3.500-2.400-2.400 3.500-3.500z"/></svg><b class="caret"></b></a></div>
  <a class="tb-s"><svg class="i" viewBox="0 -1536 1664 1792" style="width:13.000px;height:14px;vertical-align:-2.000px;"><path transform="scale(1,-1)" d="M1152 704C1152 457 951 256 704 256C457 256 256 457 256 704C256 951 457 1152 704 1152C951 1152 1152 951 1152 704ZM1664 -128C1664 -94 1650 -61 1627 -38L1284 305C1365 422 1408 562 1408 704C1408 1093 1093 1408 704 1408C315 1408 0 1093 0 704C0 315 315 0 704 0C846 0 986 43 1103 124L1446 -218C1469 -242 1502 -256 1536 -256C1606 -256 1664 -198 1664 -128Z"/></svg></a>
</div>
<div class="tablewrap">
<table class="tbl">
<colgroup><col style="width:44px"><col style="width:39px"><col style="width:49px"><col style="width:115px"><col style="width:115px"><col style="width:53px"><col style="width:63px"><col style="width:87px"><col style="width:316px"><col style="width:128px"><col style="width:74px"><col style="width:70px"><col style="width:61px"><col style="width:77px"><col style="width:77px"><col style="width:49px"><col style="width:76px"><col style="width:184px"></colgroup>
<thead><tr><th><i class="cb"></i></th><th>Id</th><th>门店</th><th>门店</th><th>名称</th><th>楼层</th><th>房间号</th><th>房型</th><th>配套设施</th><th>市场价(划线价格)</th><th>价格</th><th>浏览量</th><th>图集</th><th>房屋面积</th><th>可住人数</th><th>权重</th><th>状态</th><th>操作</th></tr></thead>
<tbody>
<tr><td><i class="cb"></i></td><td>8</td><td><a class="lk">1</a></td><td>创想第一门店</td><td>暑假特价房</td><td>1楼</td><td>103</td><td>新房特惠</td><td>吹风机,榻榻米,有电梯, 火灾报警器</td><td>80.00</td><td>60.00</td><td>18696</td><td><svg class="im" viewBox="0 0 30 30"><defs><linearGradient id="sk1" x1="0" x2="1"><stop offset="0" stop-color="#3a86c2"/><stop offset=".45" stop-color="#c4dce4"/><stop offset="1" stop-color="#3a8ecb"/></linearGradient><filter id="bl1" x="-10%" y="-10%" width="120%" height="120%"><feGaussianBlur stdDeviation=".55"/></filter><clipPath id="cp1"><rect width="30" height="30"/></clipPath></defs><g clip-path="url(#cp1)"><g filter="url(#bl1)"><rect x="-2" y="-2" width="34" height="10" fill="url(#sk1)"/><ellipse cx="14" cy="3.400" rx="11" ry="2.800" fill="#dfe9ea"/><rect x="-2" y="7" width="34" height="5" fill="#4a9acb"/><rect x="-2" y="11" width="34" height="21" fill="#6b5a52"/><path d="M-2 11h8l3 1 6-1 2 3v6l-3 4 0 8h-16z" fill="#356c20"/><path d="M0 19c4-2 9-1 13 2v9h-13z" fill="#5d8c28"/><path d="M-1 11h5v5h-5z" fill="#2c5a20"/><rect x="15" y="14" width="4.5" height="4" fill="#c8d2d0"/><path d="M17 18l3-2 1 6-3 0z" fill="#3f8a2c"/><rect x="21.500" y="11.500" width="10" height="3" fill="#b26c5a"/><rect x="21.500" y="14" width="10" height="7.500" fill="#c4a48e"/><path d="M14 23l8-2 6 1-9 9h-5z" fill="#6a4a4a"/><path d="M17 31c2-6 7-9 14-9v3c-5 0-9 2-11 6z" fill="#d6c07e"/><path d="M19 31c2-5 6-7 12-7v7z" fill="#1c84d4"/><path d="M27 23l4-1v4z" fill="#d8c8a0"/></g></g></svg></td><td>10.00</td><td>1</td><td>8</td><td class="tg"><svg class="i" viewBox="0 -1536 1536 1792" style="width:12.000px;height:14px;vertical-align:-2.000px;"><path transform="scale(1,-1)" d="M1536 640C1536 1064 1192 1408 768 1408C344 1408 0 1064 0 640C0 216 344 -128 768 -128C1192 -128 1536 216 1536 640Z"/></svg> 上架</td><td></td></tr>
<tr><td><i class="cb"></i></td><td>7</td><td><a class="lk">1</a></td><td>创想第一门店</td><td>暑假出游套房</td><td>1楼</td><td>102</td><td>两室一厅</td><td>洗衣机,有电梯,寄存行李</td><td>280.00</td><td>200.00</td><td>5199</td><td><svg class="im" viewBox="0 0 30 30"><defs><linearGradient id="sk2" x1="0" y1="0" x2="0" y2="1"><stop offset="0" stop-color="#a5d6cf"/><stop offset=".6" stop-color="#e8ddc8"/><stop offset="1" stop-color="#f0c8a8"/></linearGradient><linearGradient id="pl2" x1="0" y1="0" x2="0" y2="1"><stop offset="0" stop-color="#b4e0e2"/><stop offset=".4" stop-color="#6cc0cc"/><stop offset="1" stop-color="#3fa6c2"/></linearGradient><filter id="bl2" x="-10%" y="-10%" width="120%" height="120%"><feGaussianBlur stdDeviation=".5"/></filter><clipPath id="cp2"><rect width="30" height="30"/></clipPath></defs><g clip-path="url(#cp2)"><g filter="url(#bl2)"><rect x="-2" y="-2" width="34" height="34" fill="#5a3c2e"/><rect x="-2" y="-2" width="34" height="14" fill="url(#sk2)"/><path d="M11-2h21v15h-25z" fill="#8c684a"/><path d="M14-2l1 14" stroke="#6a4a38" stroke-width=".8"/><path d="M18.500 2.500l4.500 8h-8z" fill="#3a2418"/><path d="M25 9l6-4v5l-6 3z" fill="#2e1c18"/><rect x="-2" y="11" width="34" height="7" fill="#4e3228"/><rect x="8" y="12.500" width="8" height="2.600" fill="#e8aa62"/><rect x="17" y="12.500" width="4" height="2.600" fill="#d8b088"/><rect x="-2" y="11.200" width="9" height="1.200" fill="#e89a58"/><path d="M22 10h10v14h-8z" fill="#5a2816"/><path d="M-2 17.500l18 2.500-9 12h-9z" fill="url(#pl2)"/><path d="M5 19.500c4 .5 8 2 9 3l-2 2c-2-2-5-3-8-3z" fill="#d8ecec"/><path d="M15.500 20h4l-7 12h-6z" fill="#4a3a32"/><path d="M19 19l8-2 5 3v9l-16 3z" fill="#9a5c3c"/><path d="M19 19.500l7-2.500 3 3-10 4z" fill="#ece2d6"/><path d="M17 25l9-3 5-3v6l-15 5z" fill="#e6d8c8"/><path d="M23 22l5-4 2 1-4 6z" fill="#f0e6d6"/><path d="M10 32l7-3h15v3z" fill="#7a4a34"/></g></g></svg></td><td>15.00</td><td>2</td><td>7</td><td class="tg"><svg class="i" viewBox="0 -1536 1536 1792" style="width:12.000px;height:14px;vertical-align:-2.000px;"><path transform="scale(1,-1)" d="M1536 640C1536 1064 1192 1408 768 1408C344 1408 0 1064 0 640C0 216 344 -128 768 -128C1192 -128 1536 216 1536 640Z"/></svg> 上架</td><td></td></tr>
<tr><td><i class="cb"></i></td><td>6</td><td><a class="lk">1</a></td><td>创想第一门店</td><td>商务单间</td><td>1楼</td><td>101</td><td>一室一厅</td><td>WIFI,吹风机,有浴缸,榻榻米,安全报警器</td><td>200.00</td><td>170.00</td><td>2742</td><td><svg class="im" viewBox="0 0 30 30"><defs><linearGradient id="bg3" x1="0" x2="1"><stop offset="0" stop-color="#fdfdfe"/><stop offset=".35" stop-color="#f2f1ee"/><stop offset=".6" stop-color="#b9cfe6"/><stop offset=".8" stop-color="#a88a86"/><stop offset="1" stop-color="#8c6a62"/></linearGradient><filter id="bl3" x="-10%" y="-10%" width="120%" height="120%"><feGaussianBlur stdDeviation=".6"/></filter><clipPath id="cp3"><rect width="30" height="30"/></clipPath></defs><g clip-path="url(#cp3)"><g filter="url(#bl3)"><rect x="-2" y="-2" width="34" height="34" fill="url(#bg3)"/><rect x="-2" y="-2" width="10" height="20" fill="#fcfcfd"/><path d="M11 1l1.500 0 .5 12h-2z" fill="#e2b888"/><path d="M-2 17h14l10 15h-24z" fill="#dcd6f2"/><path d="M7 15l4-3 2 2-3 6z" fill="#8a6e5a"/><path d="M14 9c5-1 11-4 18-5v28h-12c-3-5-7-9-10-11z" fill="#d6d2c8"/><path d="M16 8c5 0 10 2 16 5v-5c-4-2-8-2-12-1z" fill="#5e6048"/><path d="M12 14c6 2 11 6 15 12l-2 3c-4-6-9-10-14-12z" fill="#5c5e4c"/><path d="M27 5l5-1v12z" fill="#c0a07c"/><path d="M20 24l6 8h-4l-5-6z" fill="#c4a890"/><path d="M26.500 16l5.500 0v16h-7z" fill="#dedede"/></g></g></svg></td><td>10.00</td><td>1</td><td>6</td><td class="tg"><svg class="i" viewBox="0 -1536 1536 1792" style="width:12.000px;height:14px;vertical-align:-2.000px;"><path transform="scale(1,-1)" d="M1536 640C1536 1064 1192 1408 768 1408C344 1408 0 1064 0 640C0 216 344 -128 768 -128C1192 -128 1536 216 1536 640Z"/></svg> 上架</td><td></td></tr>
<tr><td><i class="cb"></i></td><td>5</td><td><a class="lk">2</a></td><td>创想第二门店</td><td>普通标间</td><td>1楼</td><td>101</td><td>一室一厅</td><td>吹风机,洗衣机,有电梯, 火灾报警器,安全报警器</td><td>200.00</td><td>180.00</td><td>3374</td><td><svg class="im" viewBox="0 0 30 30"><defs><linearGradient id="sk2" x1="0" y1="0" x2="0" y2="1"><stop offset="0" stop-color="#a5d6cf"/><stop offset=".6" stop-color="#e8ddc8"/><stop offset="1" stop-color="#f0c8a8"/></linearGradient><linearGradient id="pl2" x1="0" y1="0" x2="0" y2="1"><stop offset="0" stop-color="#b4e0e2"/><stop offset=".4" stop-color="#6cc0cc"/><stop offset="1" stop-color="#3fa6c2"/></linearGradient><filter id="bl2" x="-10%" y="-10%" width="120%" height="120%"><feGaussianBlur stdDeviation=".5"/></filter><clipPath id="cp2"><rect width="30" height="30"/></clipPath></defs><g clip-path="url(#cp2)"><g filter="url(#bl2)"><rect x="-2" y="-2" width="34" height="34" fill="#5a3c2e"/><rect x="-2" y="-2" width="34" height="14" fill="url(#sk2)"/><path d="M11-2h21v15h-25z" fill="#8c684a"/><path d="M14-2l1 14" stroke="#6a4a38" stroke-width=".8"/><path d="M18.500 2.500l4.500 8h-8z" fill="#3a2418"/><path d="M25 9l6-4v5l-6 3z" fill="#2e1c18"/><rect x="-2" y="11" width="34" height="7" fill="#4e3228"/><rect x="8" y="12.500" width="8" height="2.600" fill="#e8aa62"/><rect x="17" y="12.500" width="4" height="2.600" fill="#d8b088"/><rect x="-2" y="11.200" width="9" height="1.200" fill="#e89a58"/><path d="M22 10h10v14h-8z" fill="#5a2816"/><path d="M-2 17.500l18 2.500-9 12h-9z" fill="url(#pl2)"/><path d="M5 19.500c4 .5 8 2 9 3l-2 2c-2-2-5-3-8-3z" fill="#d8ecec"/><path d="M15.500 20h4l-7 12h-6z" fill="#4a3a32"/><path d="M19 19l8-2 5 3v9l-16 3z" fill="#9a5c3c"/><path d="M19 19.500l7-2.500 3 3-10 4z" fill="#ece2d6"/><path d="M17 25l9-3 5-3v6l-15 5z" fill="#e6d8c8"/><path d="M23 22l5-4 2 1-4 6z" fill="#f0e6d6"/><path d="M10 32l7-3h15v3z" fill="#7a4a34"/></g></g></svg></td><td>15.00</td><td>2</td><td>5</td><td class="tg"><svg class="i" viewBox="0 -1536 1536 1792" style="width:12.000px;height:14px;vertical-align:-2.000px;"><path transform="scale(1,-1)" d="M1536 640C1536 1064 1192 1408 768 1408C344 1408 0 1064 0 640C0 216 344 -128 768 -128C1192 -128 1536 216 1536 640Z"/></svg> 上架</td><td></td></tr>
</tbody>
</table>
</div>
<div class="fixedcol">
  <div class="fh">操作</div>
  <div class="fr odd"><a class="xs cal b-primary"><svg class="i" viewBox="0 -1536 1664 1792" style="width:11.143px;height:12px;vertical-align:-1.714px;"><path transform="scale(1,-1)" d="M128 -128V160H416V-128ZM480 -128V160H800V-128ZM128 224V544H416V224ZM480 224V544H800V224ZM128 608V896H416V608ZM864 -128V160H1184V-128ZM480 608V896H800V608ZM1248 -128V160H1536V-128ZM864 224V544H1184V224ZM512 1088C512 1071 497 1056 480 1056H416C399 1056 384 1071 384 1088V1376C384 1393 399 1408 416 1408H480C497 1408 512 1393 512 1376V1088ZM1248 224V544H1536V224ZM864 608V896H1184V608ZM1248 608V896H1536V608ZM1280 1088C1280 1071 1265 1056 1248 1056H1184C1167 1056 1152 1071 1152 1088V1376C1152 1393 1167 1408 1184 1408H1248C1265 1408 1280 1393 1280 1376V1088ZM1664 1152C1664 1222 1606 1280 1536 1280H1408V1376C1408 1464 1336 1536 1248 1536H1184C1096 1536 1024 1464 1024 1376V1280H640V1376C640 1464 568 1536 480 1536H416C328 1536 256 1464 256 1376V1280H128C58 1280 0 1222 0 1152V-128C0 -198 58 -256 128 -256H1536C1606 -256 1664 -198 1664 -128Z"/></svg> 日历价格</a> <a class="xs b-default"><svg class="i" viewBox="0 -1536 1792 1792" style="width:12.000px;height:12px;vertical-align:-1.714px;"><path transform="scale(1,-1)" d="M1792 640C1792 657 1785 673 1773 685L1517 941C1505 953 1489 960 1472 960C1437 960 1408 931 1408 896V768H1024V1152H1152C1187 1152 1216 1181 1216 1216C1216 1233 1209 1249 1197 1261L941 1517C929 1529 913 1536 896 1536C879 1536 863 1529 851 1517L595 1261C583 1249 576 1233 576 1216C576 1181 605 1152 640 1152H768V768H384V896C384 931 355 960 320 960C303 960 287 953 275 941L19 685C7 673 0 657 0 640C0 623 7 607 19 595L275 339C287 327 303 320 320 320C355 320 384 349 384 384V512H768V128H640C605 128 576 99 576 64C576 47 583 31 595 19L851 -237C863 -249 879 -256 896 -256C913 -256 929 -249 941 -237L1197 19C1209 31 1216 47 1216 64C1216 99 1187 128 1152 128H1024V512H1408V384C1408 349 1437 320 1472 320C1489 320 1505 327 1517 339L1773 595C1785 607 1792 623 1792 640Z"/></svg></a> <a class="xs pen b-success"><svg class="i" viewBox="0 -1536 1536 1792" style="width:10.286px;height:12px;vertical-align:-1.714px;"><path transform="scale(1,-1)" d="M363 0H256V128H128V235L219 326L454 91ZM886 928C886 922 884 916 879 911L337 369C332 364 326 362 320 362C307 362 298 371 298 384C298 390 300 396 305 401L847 943C852 948 858 950 864 950C877 950 886 941 886 928ZM832 1120 0 288V-128H416L1248 704ZM1515 1024C1515 1058 1501 1091 1478 1115L1243 1349C1219 1373 1186 1387 1152 1387C1118 1387 1085 1373 1062 1349L896 1184L1312 768L1478 934C1501 957 1515 990 1515 1024Z"/></svg></a> <a class="xs b-danger"><svg class="i" viewBox="0 -1536 1408 1792" style="width:9.429px;height:12px;vertical-align:-1.714px;"><path transform="scale(1,-1)" d="M512 160C512 142 498 128 480 128H416C398 128 384 142 384 160V864C384 882 398 896 416 896H480C498 896 512 882 512 864V160ZM768 160C768 142 754 128 736 128H672C654 128 640 142 640 160V864C640 882 654 896 672 896H736C754 896 768 882 768 864V160ZM1024 160C1024 142 1010 128 992 128H928C910 128 896 142 896 160V864C896 882 910 896 928 896H992C1010 896 1024 882 1024 864V160ZM480 1152 529 1269C532 1273 540 1279 546 1280H863C868 1279 877 1273 880 1269L928 1152ZM1408 1120C1408 1138 1394 1152 1376 1152H1067L997 1319C977 1368 917 1408 864 1408H544C491 1408 431 1368 411 1319L341 1152H32C14 1152 0 1138 0 1120V1056C0 1038 14 1024 32 1024H128V72C128 -38 200 -128 288 -128H1120C1208 -128 1280 -34 1280 76V1024H1376C1394 1024 1408 1038 1408 1056Z"/></svg></a></div>
  <div class="fr"><a class="xs cal b-primary"><svg class="i" viewBox="0 -1536 1664 1792" style="width:11.143px;height:12px;vertical-align:-1.714px;"><path transform="scale(1,-1)" d="M128 -128V160H416V-128ZM480 -128V160H800V-128ZM128 224V544H416V224ZM480 224V544H800V224ZM128 608V896H416V608ZM864 -128V160H1184V-128ZM480 608V896H800V608ZM1248 -128V160H1536V-128ZM864 224V544H1184V224ZM512 1088C512 1071 497 1056 480 1056H416C399 1056 384 1071 384 1088V1376C384 1393 399 1408 416 1408H480C497 1408 512 1393 512 1376V1088ZM1248 224V544H1536V224ZM864 608V896H1184V608ZM1248 608V896H1536V608ZM1280 1088C1280 1071 1265 1056 1248 1056H1184C1167 1056 1152 1071 1152 1088V1376C1152 1393 1167 1408 1184 1408H1248C1265 1408 1280 1393 1280 1376V1088ZM1664 1152C1664 1222 1606 1280 1536 1280H1408V1376C1408 1464 1336 1536 1248 1536H1184C1096 1536 1024 1464 1024 1376V1280H640V1376C640 1464 568 1536 480 1536H416C328 1536 256 1464 256 1376V1280H128C58 1280 0 1222 0 1152V-128C0 -198 58 -256 128 -256H1536C1606 -256 1664 -198 1664 -128Z"/></svg> 日历价格</a> <a class="xs b-default"><svg class="i" viewBox="0 -1536 1792 1792" style="width:12.000px;height:12px;vertical-align:-1.714px;"><path transform="scale(1,-1)" d="M1792 640C1792 657 1785 673 1773 685L1517 941C1505 953 1489 960 1472 960C1437 960 1408 931 1408 896V768H1024V1152H1152C1187 1152 1216 1181 1216 1216C1216 1233 1209 1249 1197 1261L941 1517C929 1529 913 1536 896 1536C879 1536 863 1529 851 1517L595 1261C583 1249 576 1233 576 1216C576 1181 605 1152 640 1152H768V768H384V896C384 931 355 960 320 960C303 960 287 953 275 941L19 685C7 673 0 657 0 640C0 623 7 607 19 595L275 339C287 327 303 320 320 320C355 320 384 349 384 384V512H768V128H640C605 128 576 99 576 64C576 47 583 31 595 19L851 -237C863 -249 879 -256 896 -256C913 -256 929 -249 941 -237L1197 19C1209 31 1216 47 1216 64C1216 99 1187 128 1152 128H1024V512H1408V384C1408 349 1437 320 1472 320C1489 320 1505 327 1517 339L1773 595C1785 607 1792 623 1792 640Z"/></svg></a> <a class="xs pen b-success"><svg class="i" viewBox="0 -1536 1536 1792" style="width:10.286px;height:12px;vertical-align:-1.714px;"><path transform="scale(1,-1)" d="M363 0H256V128H128V235L219 326L454 91ZM886 928C886 922 884 916 879 911L337 369C332 364 326 362 320 362C307 362 298 371 298 384C298 390 300 396 305 401L847 943C852 948 858 950 864 950C877 950 886 941 886 928ZM832 1120 0 288V-128H416L1248 704ZM1515 1024C1515 1058 1501 1091 1478 1115L1243 1349C1219 1373 1186 1387 1152 1387C1118 1387 1085 1373 1062 1349L896 1184L1312 768L1478 934C1501 957 1515 990 1515 1024Z"/></svg></a> <a class="xs b-danger"><svg class="i" viewBox="0 -1536 1408 1792" style="width:9.429px;height:12px;vertical-align:-1.714px;"><path transform="scale(1,-1)" d="M512 160C512 142 498 128 480 128H416C398 128 384 142 384 160V864C384 882 398 896 416 896H480C498 896 512 882 512 864V160ZM768 160C768 142 754 128 736 128H672C654 128 640 142 640 160V864C640 882 654 896 672 896H736C754 896 768 882 768 864V160ZM1024 160C1024 142 1010 128 992 128H928C910 128 896 142 896 160V864C896 882 910 896 928 896H992C1010 896 1024 882 1024 864V160ZM480 1152 529 1269C532 1273 540 1279 546 1280H863C868 1279 877 1273 880 1269L928 1152ZM1408 1120C1408 1138 1394 1152 1376 1152H1067L997 1319C977 1368 917 1408 864 1408H544C491 1408 431 1368 411 1319L341 1152H32C14 1152 0 1138 0 1120V1056C0 1038 14 1024 32 1024H128V72C128 -38 200 -128 288 -128H1120C1208 -128 1280 -34 1280 76V1024H1376C1394 1024 1408 1038 1408 1056Z"/></svg></a></div>
  <div class="fr odd"><a class="xs cal b-primary"><svg class="i" viewBox="0 -1536 1664 1792" style="width:11.143px;height:12px;vertical-align:-1.714px;"><path transform="scale(1,-1)" d="M128 -128V160H416V-128ZM480 -128V160H800V-128ZM128 224V544H416V224ZM480 224V544H800V224ZM128 608V896H416V608ZM864 -128V160H1184V-128ZM480 608V896H800V608ZM1248 -128V160H1536V-128ZM864 224V544H1184V224ZM512 1088C512 1071 497 1056 480 1056H416C399 1056 384 1071 384 1088V1376C384 1393 399 1408 416 1408H480C497 1408 512 1393 512 1376V1088ZM1248 224V544H1536V224ZM864 608V896H1184V608ZM1248 608V896H1536V608ZM1280 1088C1280 1071 1265 1056 1248 1056H1184C1167 1056 1152 1071 1152 1088V1376C1152 1393 1167 1408 1184 1408H1248C1265 1408 1280 1393 1280 1376V1088ZM1664 1152C1664 1222 1606 1280 1536 1280H1408V1376C1408 1464 1336 1536 1248 1536H1184C1096 1536 1024 1464 1024 1376V1280H640V1376C640 1464 568 1536 480 1536H416C328 1536 256 1464 256 1376V1280H128C58 1280 0 1222 0 1152V-128C0 -198 58 -256 128 -256H1536C1606 -256 1664 -198 1664 -128Z"/></svg> 日历价格</a> <a class="xs b-default"><svg class="i" viewBox="0 -1536 1792 1792" style="width:12.000px;height:12px;vertical-align:-1.714px;"><path transform="scale(1,-1)" d="M1792 640C1792 657 1785 673 1773 685L1517 941C1505 953 1489 960 1472 960C1437 960 1408 931 1408 896V768H1024V1152H1152C1187 1152 1216 1181 1216 1216C1216 1233 1209 1249 1197 1261L941 1517C929 1529 913 1536 896 1536C879 1536 863 1529 851 1517L595 1261C583 1249 576 1233 576 1216C576 1181 605 1152 640 1152H768V768H384V896C384 931 355 960 320 960C303 960 287 953 275 941L19 685C7 673 0 657 0 640C0 623 7 607 19 595L275 339C287 327 303 320 320 320C355 320 384 349 384 384V512H768V128H640C605 128 576 99 576 64C576 47 583 31 595 19L851 -237C863 -249 879 -256 896 -256C913 -256 929 -249 941 -237L1197 19C1209 31 1216 47 1216 64C1216 99 1187 128 1152 128H1024V512H1408V384C1408 349 1437 320 1472 320C1489 320 1505 327 1517 339L1773 595C1785 607 1792 623 1792 640Z"/></svg></a> <a class="xs pen b-success"><svg class="i" viewBox="0 -1536 1536 1792" style="width:10.286px;height:12px;vertical-align:-1.714px;"><path transform="scale(1,-1)" d="M363 0H256V128H128V235L219 326L454 91ZM886 928C886 922 884 916 879 911L337 369C332 364 326 362 320 362C307 362 298 371 298 384C298 390 300 396 305 401L847 943C852 948 858 950 864 950C877 950 886 941 886 928ZM832 1120 0 288V-128H416L1248 704ZM1515 1024C1515 1058 1501 1091 1478 1115L1243 1349C1219 1373 1186 1387 1152 1387C1118 1387 1085 1373 1062 1349L896 1184L1312 768L1478 934C1501 957 1515 990 1515 1024Z"/></svg></a> <a class="xs b-danger"><svg class="i" viewBox="0 -1536 1408 1792" style="width:9.429px;height:12px;vertical-align:-1.714px;"><path transform="scale(1,-1)" d="M512 160C512 142 498 128 480 128H416C398 128 384 142 384 160V864C384 882 398 896 416 896H480C498 896 512 882 512 864V160ZM768 160C768 142 754 128 736 128H672C654 128 640 142 640 160V864C640 882 654 896 672 896H736C754 896 768 882 768 864V160ZM1024 160C1024 142 1010 128 992 128H928C910 128 896 142 896 160V864C896 882 910 896 928 896H992C1010 896 1024 882 1024 864V160ZM480 1152 529 1269C532 1273 540 1279 546 1280H863C868 1279 877 1273 880 1269L928 1152ZM1408 1120C1408 1138 1394 1152 1376 1152H1067L997 1319C977 1368 917 1408 864 1408H544C491 1408 431 1368 411 1319L341 1152H32C14 1152 0 1138 0 1120V1056C0 1038 14 1024 32 1024H128V72C128 -38 200 -128 288 -128H1120C1208 -128 1280 -34 1280 76V1024H1376C1394 1024 1408 1038 1408 1056Z"/></svg></a></div>
  <div class="fr"><a class="xs cal b-primary"><svg class="i" viewBox="0 -1536 1664 1792" style="width:11.143px;height:12px;vertical-align:-1.714px;"><path transform="scale(1,-1)" d="M128 -128V160H416V-128ZM480 -128V160H800V-128ZM128 224V544H416V224ZM480 224V544H800V224ZM128 608V896H416V608ZM864 -128V160H1184V-128ZM480 608V896H800V608ZM1248 -128V160H1536V-128ZM864 224V544H1184V224ZM512 1088C512 1071 497 1056 480 1056H416C399 1056 384 1071 384 1088V1376C384 1393 399 1408 416 1408H480C497 1408 512 1393 512 1376V1088ZM1248 224V544H1536V224ZM864 608V896H1184V608ZM1248 608V896H1536V608ZM1280 1088C1280 1071 1265 1056 1248 1056H1184C1167 1056 1152 1071 1152 1088V1376C1152 1393 1167 1408 1184 1408H1248C1265 1408 1280 1393 1280 1376V1088ZM1664 1152C1664 1222 1606 1280 1536 1280H1408V1376C1408 1464 1336 1536 1248 1536H1184C1096 1536 1024 1464 1024 1376V1280H640V1376C640 1464 568 1536 480 1536H416C328 1536 256 1464 256 1376V1280H128C58 1280 0 1222 0 1152V-128C0 -198 58 -256 128 -256H1536C1606 -256 1664 -198 1664 -128Z"/></svg> 日历价格</a> <a class="xs b-default"><svg class="i" viewBox="0 -1536 1792 1792" style="width:12.000px;height:12px;vertical-align:-1.714px;"><path transform="scale(1,-1)" d="M1792 640C1792 657 1785 673 1773 685L1517 941C1505 953 1489 960 1472 960C1437 960 1408 931 1408 896V768H1024V1152H1152C1187 1152 1216 1181 1216 1216C1216 1233 1209 1249 1197 1261L941 1517C929 1529 913 1536 896 1536C879 1536 863 1529 851 1517L595 1261C583 1249 576 1233 576 1216C576 1181 605 1152 640 1152H768V768H384V896C384 931 355 960 320 960C303 960 287 953 275 941L19 685C7 673 0 657 0 640C0 623 7 607 19 595L275 339C287 327 303 320 320 320C355 320 384 349 384 384V512H768V128H640C605 128 576 99 576 64C576 47 583 31 595 19L851 -237C863 -249 879 -256 896 -256C913 -256 929 -249 941 -237L1197 19C1209 31 1216 47 1216 64C1216 99 1187 128 1152 128H1024V512H1408V384C1408 349 1437 320 1472 320C1489 320 1505 327 1517 339L1773 595C1785 607 1792 623 1792 640Z"/></svg></a> <a class="xs pen b-success"><svg class="i" viewBox="0 -1536 1536 1792" style="width:10.286px;height:12px;vertical-align:-1.714px;"><path transform="scale(1,-1)" d="M363 0H256V128H128V235L219 326L454 91ZM886 928C886 922 884 916 879 911L337 369C332 364 326 362 320 362C307 362 298 371 298 384C298 390 300 396 305 401L847 943C852 948 858 950 864 950C877 950 886 941 886 928ZM832 1120 0 288V-128H416L1248 704ZM1515 1024C1515 1058 1501 1091 1478 1115L1243 1349C1219 1373 1186 1387 1152 1387C1118 1387 1085 1373 1062 1349L896 1184L1312 768L1478 934C1501 957 1515 990 1515 1024Z"/></svg></a> <a class="xs b-danger"><svg class="i" viewBox="0 -1536 1408 1792" style="width:9.429px;height:12px;vertical-align:-1.714px;"><path transform="scale(1,-1)" d="M512 160C512 142 498 128 480 128H416C398 128 384 142 384 160V864C384 882 398 896 416 896H480C498 896 512 882 512 864V160ZM768 160C768 142 754 128 736 128H672C654 128 640 142 640 160V864C640 882 654 896 672 896H736C754 896 768 882 768 864V160ZM1024 160C1024 142 1010 128 992 128H928C910 128 896 142 896 160V864C896 882 910 896 928 896H992C1010 896 1024 882 1024 864V160ZM480 1152 529 1269C532 1273 540 1279 546 1280H863C868 1279 877 1273 880 1269L928 1152ZM1408 1120C1408 1138 1394 1152 1376 1152H1067L997 1319C977 1368 917 1408 864 1408H544C491 1408 431 1368 411 1319L341 1152H32C14 1152 0 1138 0 1120V1056C0 1038 14 1024 32 1024H128V72C128 -38 200 -128 288 -128H1120C1208 -128 1280 -34 1280 76V1024H1376C1394 1024 1408 1038 1408 1056Z"/></svg></a></div>
</div>
<div class="hscroll"><span class="al"></span><span class="thumb"></span><span class="ar"></span></div>
<div class="pinfo">显示第 1 到第 4 条记录，总共 4 条记录</div>
    </div>
  </div>
</div>
</body>
</html>
